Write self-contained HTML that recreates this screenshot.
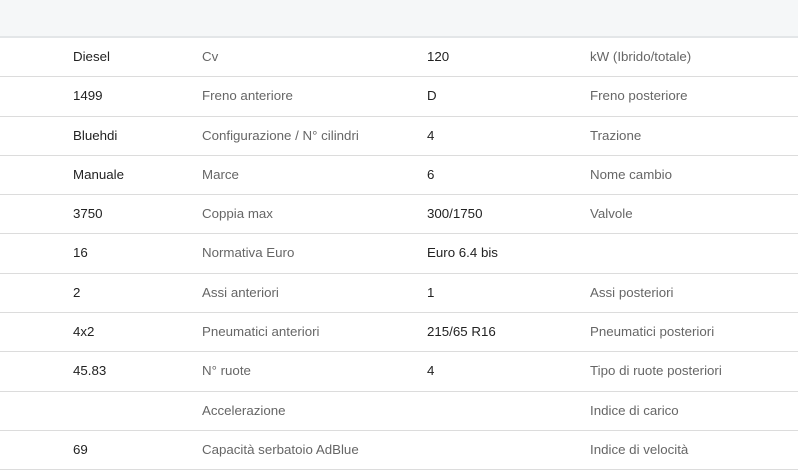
<!DOCTYPE html>
<html><head><style>
body{margin:0;width:798px;height:466px;overflow:hidden;background:#fff;font-family:"Liberation Sans",sans-serif;font-size:13.3px;}
.hd{height:36px;background:#f5f7f8;border-bottom:2px solid #e3e6e8;}
.r{position:relative;height:38.3px;border-bottom:1px solid #dcdcdc;}
.r span{position:absolute;top:11px;white-space:nowrap;}
.a{left:73px;color:#222}.b{left:202px;color:#666}.c{left:427px;color:#222}.d{left:590px;color:#666}
</style></head><body>
<div class="hd"></div>
<div class="r"><span class="a">Diesel</span><span class="b">Cv</span><span class="c">120</span><span class="d">kW (Ibrido/totale)</span></div>
<div class="r"><span class="a">1499</span><span class="b">Freno anteriore</span><span class="c">D</span><span class="d">Freno posteriore</span></div>
<div class="r"><span class="a">Bluehdi</span><span class="b">Configurazione / N° cilindri</span><span class="c">4</span><span class="d">Trazione</span></div>
<div class="r"><span class="a">Manuale</span><span class="b">Marce</span><span class="c">6</span><span class="d">Nome cambio</span></div>
<div class="r"><span class="a">3750</span><span class="b">Coppia max</span><span class="c">300/1750</span><span class="d">Valvole</span></div>
<div class="r"><span class="a">16</span><span class="b">Normativa Euro</span><span class="c">Euro 6.4 bis</span></div>
<div class="r"><span class="a">2</span><span class="b">Assi anteriori</span><span class="c">1</span><span class="d">Assi posteriori</span></div>
<div class="r"><span class="a">4x2</span><span class="b">Pneumatici anteriori</span><span class="c">215/65 R16</span><span class="d">Pneumatici posteriori</span></div>
<div class="r"><span class="a">45.83</span><span class="b">N° ruote</span><span class="c">4</span><span class="d">Tipo di ruote posteriori</span></div>
<div class="r"><span class="b">Accelerazione</span><span class="d">Indice di carico</span></div>
<div class="r"><span class="a">69</span><span class="b">Capacità serbatoio AdBlue</span><span class="d">Indice di velocità</span></div>
</body></html>
